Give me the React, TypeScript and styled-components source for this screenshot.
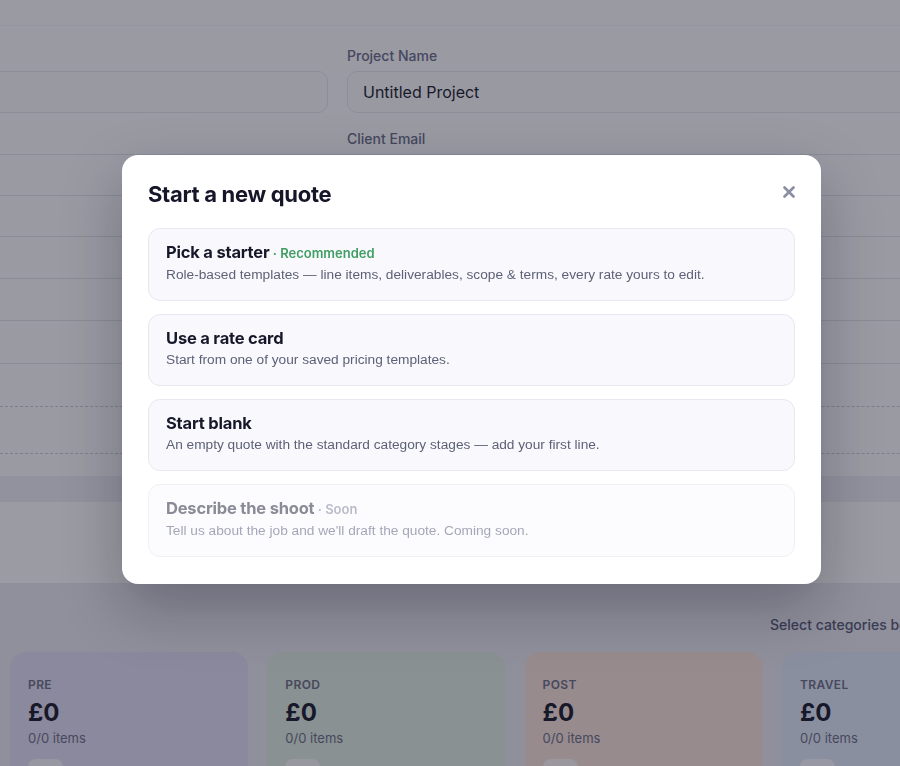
import React from "react";
import styled, { createGlobalStyle } from "styled-components";

const Global = createGlobalStyle`
  html, body { margin: 0; padding: 0; }
  body {
    overflow: hidden;
    background: #e8eaef;
    font-family: Inter, "Noto Sans", sans-serif;
    color: #1f2130;
  }
  * { box-sizing: border-box; }
`;

const Page = styled.div`
  width: 1120px;
  min-height: 766px;
  display: flex;
  flex-direction: column;
  background: #e8eaef;
`;

const TopBar = styled.div`
  height: 26px;
  background: #fbfbfd;
  border-bottom: 1px solid #f1f2f6;
`;

const FormArea = styled.div`
  background: #fbfbfd;
  padding: 22px 0 7px;
`;

const FormGrid = styled.div`
  display: grid;
  grid-template-columns: 540px 620px;
  column-gap: 19px;
  margin-left: -212px;
`;

const Field = styled.div`
  display: flex;
  flex-direction: column;
`;

const Label = styled.div`
  font-size: 14px;
  font-weight: 500;
  line-height: 16px;
  color: #6a6e88;
  margin-bottom: 7px;
`;

const InputBox = styled.div`
  height: 42px;
  border: 1px solid #e3e5ec;
  border-radius: 10px;
  background: #fafafc;
  display: flex;
  align-items: center;
  padding: 0 15px;
  font-size: 16px;
  color: #1c1e2c;
`;

const SubLabel = styled(Label)`
  margin: 18px 0 0;
  grid-column: 2;
`;

const Rows = styled.div`
  display: flex;
  flex-direction: column;
  background: #fbfbfd;
`;

const Row = styled.div<{ $h: number; $dashed?: boolean; $top?: boolean }>`
  height: ${(p) => p.$h}px;
  border-bottom: 1px ${(p) => (p.$dashed ? "dashed #c9ccd6" : "solid #e0e2e9")};
  border-top: ${(p) => (p.$top ? "1px solid #e0e2e9" : "none")};
`;

const Spacer = styled.div`
  height: 22px;
  background: #fbfbfd;
`;

const Band = styled.div`
  height: 26px;
  background: #eceef3;
`;

const Panel = styled.div`
  height: 81px;
  background: #fdfdfe;
`;

const CategorySection = styled.div`
  padding: 34px 0 0 10px;
  display: flex;
  flex-direction: column;
  gap: 19px;
`;

const Hint = styled.div`
  align-self: flex-end;
  padding-right: 76px;
  font-size: 14px;
  font-weight: 500;
  line-height: 16px;
  color: #575b78;
  white-space: nowrap;
`;

const CardRow = styled.div`
  display: flex;
  gap: 19.3px;
`;

const CatCard = styled.div<{ $bg: string }>`
  flex: 0 0 238px;
  height: 140px;
  border-radius: 16px;
  background: ${(p) => p.$bg};
  padding: 25px 18px 0;
  display: flex;
  flex-direction: column;
`;

const CatLabel = styled.div`
  font-size: 12px;
  font-weight: 600;
  letter-spacing: 0.4px;
  line-height: 16px;
  color: #6c6f86;
  text-transform: uppercase;
`;

const CatValue = styled.div`
  font-size: 24px;
  font-weight: 700;
  line-height: 28px;
  margin-top: 6px;
  color: #1a1c2e;
`;

const CatCount = styled.div`
  font-size: 13px;
  line-height: 18px;
  margin-top: 2px;
  color: #6c6f86;
`;

const CatButton = styled.div`
  margin-top: 12px;
  width: 35px;
  height: 24px;
  border-radius: 8px;
  background: rgba(255, 255, 255, 0.7);
`;

const Overlay = styled.div`
  position: fixed;
  inset: 0;
  background: rgba(18, 18, 38, 0.42);
  display: flex;
  align-items: flex-start;
  justify-content: flex-start;
  padding: 155px 0 0 122px;
`;

const Modal = styled.div`
  width: 699px;
  background: #ffffff;
  border-radius: 16px;
  padding: 25px 26px 27px;
  box-shadow: 0 24px 60px rgba(10, 10, 30, 0.28);
  display: flex;
  flex-direction: column;
`;

const Header = styled.div`
  display: flex;
  justify-content: space-between;
  align-items: flex-start;
  margin-bottom: 20px;
`;

const Title = styled.h2`
  margin: 0;
  font-size: 22px;
  line-height: 28px;
  font-weight: 700;
  letter-spacing: -0.3px;
  color: #151729;
`;

const Close = styled.button`
  border: 0;
  background: none;
  padding: 0;
  margin-top: 5px;
  width: 13px;
  height: 13px;
  display: flex;
  align-items: center;
  justify-content: center;
  color: #8a8ea4;
  cursor: pointer;
`;

const Options = styled.div`
  display: flex;
  flex-direction: column;
  gap: 13px;
`;

const Option = styled.div<{ $disabled?: boolean }>`
  border: 1px solid ${(p) => (p.$disabled ? "#f0f0f6" : "#e7e7f1")};
  background: ${(p) => (p.$disabled ? "#fcfcfe" : "#f9f9fd")};
  border-radius: 12px;
  padding: 13px 17px 15px;
  display: flex;
  flex-direction: column;
  gap: 2px;
`;

const OptTitle = styled.div<{ $disabled?: boolean }>`
  font-size: 16.5px;
  line-height: 20px;
  font-weight: 700;
  letter-spacing: -0.2px;
  color: ${(p) => (p.$disabled ? "#8a8b97" : "#16182a")};
`;

const Tag = styled.span<{ $tone: "green" | "muted" }>`
  font-size: 13px;
  font-weight: 600;
  letter-spacing: 0;
  color: ${(p) => (p.$tone === "green" ? "#3f9e63" : "#b9bbc9")};
`;

const OptDesc = styled.div<{ $disabled?: boolean }>`
  font-family: "Liberation Sans", Arial, sans-serif;
  font-size: 13.7px;
  line-height: 20px;
  color: ${(p) => (p.$disabled ? "#a5a7b8" : "#5d6177")};
`;

const categories = [
  { label: "Pre", bg: "#e2dff3" },
  { label: "Prod", bg: "#dfece0" },
  { label: "Post", bg: "#f6e2d9" },
  { label: "Travel", bg: "#e1e9f8" },
  { label: "Other", bg: "#ece4f2" },
];

const options = [
  {
    title: "Pick a starter",
    tag: "Recommended",
    tone: "green" as const,
    desc: "Role-based templates — line items, deliverables, scope & terms, every rate yours to edit.",
  },
  {
    title: "Use a rate card",
    desc: "Start from one of your saved pricing templates.",
  },
  {
    title: "Start blank",
    desc: "An empty quote with the standard category stages — add your first line.",
  },
  {
    title: "Describe the shoot",
    tag: "Soon",
    tone: "muted" as const,
    desc: "Tell us about the job and we'll draft the quote. Coming soon.",
    disabled: true,
  },
];

export default function App() {
  return (
    <>
      <Global />
      <Page>
        <TopBar />
        <FormArea>
          <FormGrid>
            <Field>
              <Label aria-hidden>&nbsp;</Label>
              <InputBox />
            </Field>
            <Field>
              <Label>Project Name</Label>
              <InputBox>Untitled Project</InputBox>
            </Field>
            <SubLabel>Client Email</SubLabel>
          </FormGrid>
        </FormArea>
        <Rows>
          <Row $h={42} $top />
          <Row $h={41} />
          <Row $h={42} />
          <Row $h={42} />
          <Row $h={43} />
          <Row $h={43} $dashed />
          <Row $h={47} $dashed />
        </Rows>
        <Spacer />
        <Band />
        <Panel />
        <CategorySection>
          <Hint>Select categories below to add line items</Hint>
          <CardRow>
            {categories.map((c) => (
              <CatCard key={c.label} $bg={c.bg}>
                <CatLabel>{c.label}</CatLabel>
                <CatValue>£0</CatValue>
                <CatCount>0/0 items</CatCount>
                <CatButton />
              </CatCard>
            ))}
          </CardRow>
        </CategorySection>
      </Page>
      <Overlay>
        <Modal role="dialog" aria-label="Start a new quote">
          <Header>
            <Title>Start a new quote</Title>
            <Close aria-label="Close">
              <svg width="12" height="12" viewBox="0 0 12 12" fill="none">
                <path
                  d="M1.5 1.5 L10.5 10.5 M10.5 1.5 L1.5 10.5"
                  stroke="currentColor"
                  strokeWidth="2.6"
                  strokeLinecap="round"
                />
              </svg>
            </Close>
          </Header>
          <Options>
            {options.map((o) => (
              <Option key={o.title} $disabled={o.disabled}>
                <OptTitle $disabled={o.disabled}>
                  {o.title}
                  {o.tag && <Tag $tone={o.tone!}> · {o.tag}</Tag>}
                </OptTitle>
                <OptDesc $disabled={o.disabled}>{o.desc}</OptDesc>
              </Option>
            ))}
          </Options>
        </Modal>
      </Overlay>
    </>
  );
}
